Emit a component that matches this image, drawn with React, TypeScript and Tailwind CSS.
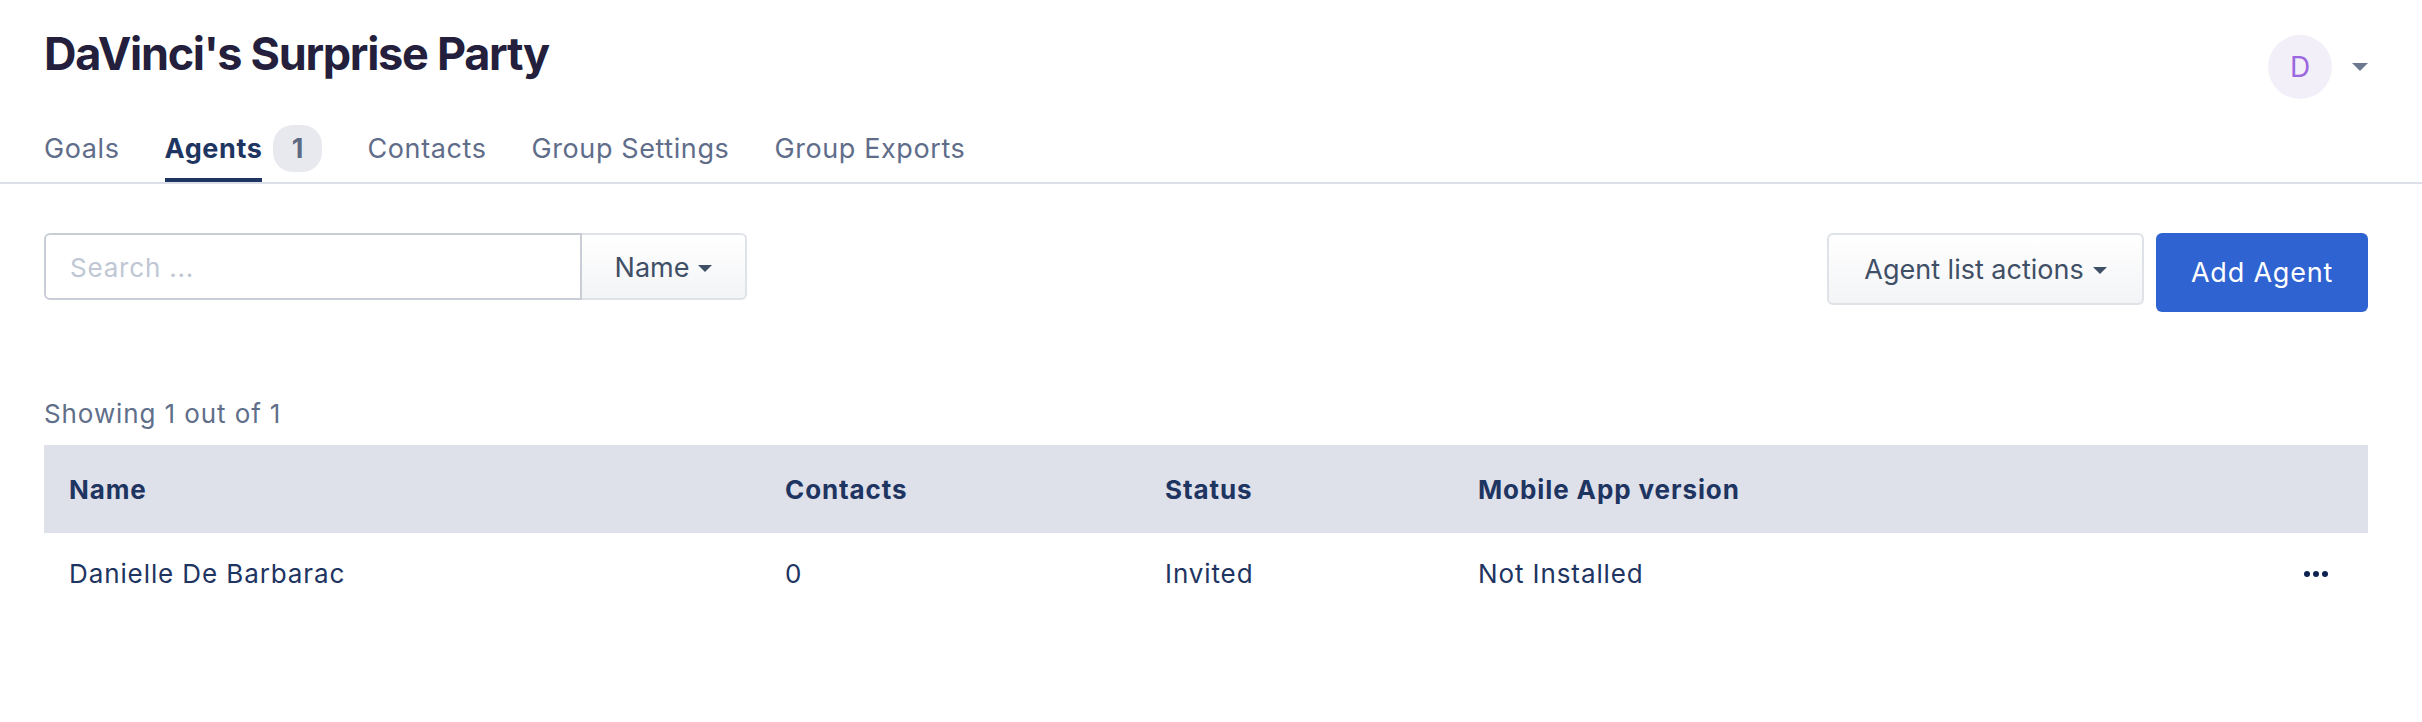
import React from 'react';

const Caret = ({ className = '' }: { className?: string }) => (
  <svg viewBox="0 0 14 7" className={className} fill="currentColor">
    <path d="M0 0h14L7 7z" />
  </svg>
);

const agents = [
  { name: 'Danielle De Barbarac', contacts: 0, status: 'Invited', app: 'Not Installed' },
];

const cols = 'grid grid-cols-[716px_380px_313px_1fr_120px]';

const App = () => {
  return (
    <div className="min-h-screen bg-white font-['Inter',sans-serif]">
      {/* Header */}
      <div className="border-b-2 border-[#dcdfe7]">
        <div className="pl-[44px] pr-[54px] pt-[27px]">
          <div className="flex items-start justify-between">
            <h1 className="text-[45px] leading-[54px] font-bold text-[#231f3c] tracking-[-1.3px]">
              DaVinci's Surprise Party
            </h1>
            <div className="flex items-center gap-[20px] pt-[8px]">
              <div className="w-[64px] h-[64px] rounded-full bg-[#f3eff9] flex items-center justify-center text-[28px] text-[#9a67e0]">
                D
              </div>
              <Caret className="w-[16px] h-[8px] text-[#6b7a90]" />
            </div>
          </div>

          {/* Tabs */}
          <nav className="mt-[26px] flex items-start gap-[45px] text-[27px] leading-[40px] tracking-[0.6px]">
            <span className="h-[47px] flex items-center text-[#5f6d8a]">Goals</span>
            <div className="flex items-start gap-[11px]">
              <div className="flex flex-col">
                <span className="h-[47px] flex items-center font-bold text-[#1e3461]">Agents</span>
                <div className="mt-[6px] h-[4px] bg-[#1e3461]" />
              </div>
              <span className="h-[47px] w-[49px] rounded-[20px] bg-[#e8e9ee] flex items-center justify-center font-bold text-[#5d6a83]">
                1
              </span>
            </div>
            <span className="h-[47px] flex items-center text-[#5f6d8a]">Contacts</span>
            <span className="h-[47px] flex items-center text-[#5f6d8a]">Group Settings</span>
            <span className="h-[47px] flex items-center text-[#5f6d8a]">Group Exports</span>
          </nav>
        </div>
      </div>

      <div className="pl-[44px] pr-[54px]">
        {/* Toolbar */}
        <div className="mt-[49px] flex items-start justify-between">
          <div className="flex">
            <div className="w-[538px] h-[67px] border-2 border-[#c9cdd5] rounded-l-[6px] flex items-center pl-[24px] pt-[2px] text-[26px] tracking-[0.8px] text-[#c0c7d4]">
              Search ...
            </div>
            <button className="w-[165px] h-[67px] border-2 border-l-0 border-[#dfe2e7] rounded-r-[6px] bg-gradient-to-b from-white to-[#f3f4f6] flex items-center justify-center gap-[9px] pt-[3px] text-[27px] text-[#3f4f66]">
              Name
              <Caret className="w-[14px] h-[7px] text-[#3f4f66]" />
            </button>
          </div>
          <div className="flex items-start gap-[12px]">
            <button className="w-[317px] h-[72px] border-2 border-[#dfe2e7] rounded-[6px] bg-gradient-to-b from-white to-[#f3f4f6] flex items-center justify-center gap-[9px] pt-[3px] text-[27px] text-[#3f4f66]">
              Agent list actions
              <Caret className="w-[14px] h-[7px] text-[#3f4f66]" />
            </button>
            <button className="w-[212px] h-[79px] rounded-[6px] bg-[#2e63d1] flex items-center justify-center pt-[2px] text-[27px] tracking-[0.8px] text-white">
              Add Agent
            </button>
          </div>
        </div>

        {/* Count */}
        <p className="mt-[84px] text-[26px] leading-[36px] tracking-[0.9px] text-[#5f6f8a]">Showing 1 out of 1</p>

        {/* Table */}
        <div className="mt-[13px] text-[26px] tracking-[0.9px]">
          <div className={`${cols} h-[88px] bg-[#dee0ea] items-center font-bold text-[#1e3461]`}>
            <div className="px-[25px]">Name</div>
            <div className="px-[25px]">Contacts</div>
            <div className="px-[25px]">Status</div>
            <div className="px-[25px]">Mobile App version</div>
            <div />
          </div>
          {agents.map((a) => (
            <div
              key={a.name}
              className={`${cols} h-[81px] items-center text-[#1e3461]`}
            >
              <div className="px-[25px]">{a.name}</div>
              <div className="px-[25px]">{a.contacts}</div>
              <div className="px-[25px]">{a.status}</div>
              <div className="px-[25px]">{a.app}</div>
              <div className="flex justify-end gap-[3px] pr-[40px]">
                <span className="w-[6px] h-[6px] rounded-full bg-[#0e2450]" />
                <span className="w-[6px] h-[6px] rounded-full bg-[#0e2450]" />
                <span className="w-[6px] h-[6px] rounded-full bg-[#0e2450]" />
              </div>
            </div>
          ))}
        </div>
      </div>
    </div>
  );
};

export default App;
